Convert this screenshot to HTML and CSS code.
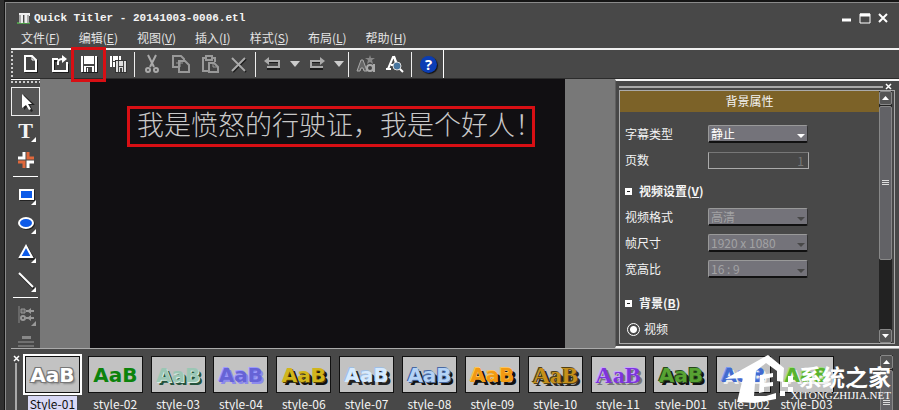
FILE: index.html
```html
<!DOCTYPE html>
<html lang="zh-CN">
<head>
<meta charset="utf-8">
<title>Quick Titler - 20141003-0006.etl</title>
<link rel="stylesheet" href="styles.css">
</head>
<body>
<div class="window">
  <header class="titlebar">
    <svg class="app-icon" width="16" height="12" viewBox="0 0 16 12"><path d="M1 11h13" stroke="#4f9a4a" stroke-width="2"/><path d="M3 1h4v10H3zM8 1h5v10H8z" fill="#aaa"/><path d="M3 1h11v3h-1V3h-2v8H9V3H7v8H5V3H3z" fill="#eee"/></svg>
    <h1>Quick Titler - 20141003-0006.etl</h1>
    <div class="window-buttons">
      <button aria-label="最小化"><svg width="12" height="12" viewBox="0 0 12 12"><path d="M1 8h9" stroke="#fff" stroke-width="3"/></svg></button>
      <button aria-label="最大化"><svg width="12" height="12" viewBox="0 0 12 12"><path d="M1 2h10v9H1z" fill="none" stroke="#fff"/><path d="M1 3h10" stroke="#fff" stroke-width="3"/></svg></button>
      <button aria-label="关闭"><svg width="12" height="12" viewBox="0 0 12 12"><path d="M2 2l8 8M10 2l-8 8" stroke="#fff" stroke-width="2"/></svg></button>
    </div>
  </header>

  <nav class="menu">
    <a href="#">文件(<u>F</u>)</a>
    <a href="#">编辑(<u>E</u>)</a>
    <a href="#">视图(<u>V</u>)</a>
    <a href="#">插入(<u>I</u>)</a>
    <a href="#">样式(<u>S</u>)</a>
    <a href="#">布局(<u>L</u>)</a>
    <a href="#">帮助(<u>H</u>)</a>
  </nav>

  <div class="toolbar">
    <span class="grip"></span>
    <button aria-label="新建"><svg width="20" height="20" viewBox="0 0 20 20"><path d="M5 3h7l4 4v11H5z" fill="none" stroke="#1c1c1c" stroke-width="2"/><path d="M4 2h7l4 4v11H4z" fill="#444" stroke="#fff" stroke-width="2"/><path d="M11 2v4h4" fill="none" stroke="#fff"/></svg></button>
    <button aria-label="打开"><svg width="20" height="20" viewBox="0 0 20 20"><path d="M8 6H3v11h14V9" fill="none" stroke="#1c1c1c" stroke-width="2" transform="translate(1 1)"/><path d="M8 5H3v12h14V8M8 11V8q0-3 5-3" fill="none" stroke="#fff" stroke-width="2"/><path d="M12 1l5 4-5 4z" fill="#fff"/></svg></button>
    <button class="marked" aria-label="保存"><svg width="20" height="20" viewBox="0 0 20 20"><path d="M3 3h16v16H3z" fill="#1c1c1c"/><path d="M2 2h16v16H2z" fill="#fff"/><path d="M4 2h1v16H4zM15 2h1v16h-1zM5 10h10v2H5zM7 13h6v5H7z" fill="#444"/><path d="M8 14h1v4H8z" fill="#fff"/></svg></button>
    <button aria-label="另存为"><svg width="20" height="20" viewBox="0 0 20 20"><path d="M2 2h11v11H2z" fill="#fff"/><path d="M4 2h1v11H4zM10 2h1v5h-1zM5 7h5v1H5z" fill="#444"/><path d="M7 6h12v13H7z" fill="#333"/><path d="M8 7h10v11H8z" fill="#ddd"/><path d="M10 7h1v11h-1zM15 7h1v11h-1zM11 12h4v1h-4zM12 14h2v4h-2z" fill="#444"/></svg></button>
    <span class="rule"></span>
    <button aria-label="剪切"><svg width="20" height="20" viewBox="0 0 20 20"><path d="M6 1l6 12M14 1L8 13" stroke="#aaa" stroke-width="2"/><circle cx="6" cy="16" r="2" fill="none" stroke="#aaa" stroke-width="2"/><circle cx="14" cy="16" r="2" fill="none" stroke="#aaa" stroke-width="2"/></svg></button>
    <button aria-label="复制"><svg width="20" height="20" viewBox="0 0 20 20"><path d="M2 2h8l3 3v8H2z" fill="none" stroke="#999" stroke-width="2"/><path d="M8 7h6l4 4v7H8z" fill="#444" stroke="#999" stroke-width="2"/><path d="M5 9h7M9 6v7" stroke="#999"/></svg></button>
    <button aria-label="粘贴"><svg width="20" height="20" viewBox="0 0 20 20"><path d="M8 17H3V4h3M12 4h3v4" fill="none" stroke="#999" stroke-width="2"/><path d="M6 2h6v4H6z" fill="none" stroke="#999" stroke-width="2"/><path d="M9 9h5l4 4v5H9z" fill="#444" stroke="#999" stroke-width="2"/><path d="M13 9v4h4" stroke="#999" fill="none"/></svg></button>
    <button aria-label="删除"><svg width="20" height="20" viewBox="0 0 20 20"><path d="M4 5l13 13M17 5L4 18" stroke="#1c1c1c" stroke-width="2"/><path d="M3 4l13 13M16 4L3 17" stroke="#aaa" stroke-width="2"/></svg></button>
    <span class="rule"></span>
    <button aria-label="撤销"><svg width="20" height="20" viewBox="0 0 20 20"><path d="M5 8h11v7H4" fill="none" stroke="#1c1c1c" stroke-width="2"/><path d="M5 7h11v6H4" fill="none" stroke="#aaa" stroke-width="2"/><path d="M1 7l5-4v8z" fill="#aaa"/></svg></button>
    <button class="drop" aria-label="撤销列表"><svg width="10" height="6" viewBox="0 0 10 6"><path d="M0 0h10L5 6z" fill="#ccc"/></svg></button>
    <button aria-label="重做"><svg width="20" height="20" viewBox="0 0 20 20"><path d="M15 8H4v7h12" fill="none" stroke="#1c1c1c" stroke-width="2"/><path d="M14 7H4v6h12" fill="none" stroke="#aaa" stroke-width="2"/><path d="M18 7l-5-4v8z" fill="#aaa"/></svg></button>
    <button class="drop" aria-label="重做列表"><svg width="10" height="6" viewBox="0 0 10 6"><path d="M0 0h10L5 6z" fill="#ccc"/></svg></button>
    <span class="rule"></span>
    <button aria-label="样式"><svg width="20" height="20" viewBox="0 0 20 20"><path d="M1 17L5 6h2l4 11H8l-1-3H5l-1 3z" fill="#666" stroke="#aaa"/><circle cx="14" cy="14" r="3" fill="#444" stroke="#aaa" stroke-width="2"/><path d="M18 10v8" stroke="#aaa" stroke-width="2"/><path d="M14 1l1 3h4l-3 2 1 4-3-2-3 2 1-4-3-2h4z" fill="#888"/></svg></button>
    <button aria-label="预览"><svg width="20" height="20" viewBox="0 0 20 20"><path d="M3 15L8 3h1l4 12" fill="none" stroke="#fff" stroke-width="2"/><path d="M9 2l5 14" stroke="#fff" stroke-width="2"/><path d="M1 15h5M6 11h6" stroke="#fff" stroke-width="2"/><circle cx="12" cy="12" r="4" fill="#48759e" stroke="#ddd"/><path d="M15 15l3 3" stroke="#fff" stroke-width="2"/></svg></button>
    <span class="rule"></span>
    <button class="help" aria-label="帮助"><span>?</span></button>
    <span class="edge"></span>
  </div>

  <main class="workspace">
    <aside class="tools">
      <span class="grip-row"></span>
      <button class="active" aria-label="选择"><svg width="22" height="22" viewBox="0 0 22 22"><path d="M9 4v15l4-4 3 6 2-1-3-6h5z" fill="#222"/><path d="M7 3v14l4-3 3 5 2-1-3-5h4z" fill="#fff"/></svg></button>
      <button class="more letter" aria-label="文字">T</button>
      <button aria-label="图像"><svg width="22" height="22" viewBox="0 0 22 22" fill="none" stroke-width="2"><path d="M3 9h6V3" stroke="#fff" stroke-width="3"/><path d="M13 3v6h6" stroke="#e0683c" stroke-width="3"/><path d="M3 13h6v6" stroke="#e0683c" stroke-width="3"/><path d="M19 13h-6v6" stroke="#fff" stroke-width="3"/></svg></button>
      <span class="line"></span>
      <button class="more" aria-label="矩形"><svg width="22" height="22" viewBox="0 0 22 22"><path d="M6 8h13v9H6z" stroke="#222" stroke-width="2"/><path d="M5 7h13v9H5z" fill="#0c5ae8" stroke="#fff" stroke-width="2"/></svg></button>
      <button class="more" aria-label="椭圆"><svg width="22" height="22" viewBox="0 0 22 22"><ellipse cx="12" cy="12" rx="7" ry="5" stroke="#222" stroke-width="2"/><ellipse cx="11" cy="11" rx="7" ry="5" fill="#0c5ae8" stroke="#fff" stroke-width="2"/></svg></button>
      <button class="more" aria-label="三角形"><svg width="22" height="22" viewBox="0 0 22 22"><path d="M12 6l7 12H5z" stroke="#222" stroke-width="2"/><path d="M11 5l6 11H5z" fill="#0c5ae8" stroke="#fff" stroke-width="2"/></svg></button>
      <button class="more" aria-label="直线"><svg width="22" height="22" viewBox="0 0 22 22"><path d="M5 5l14 14" stroke="#222" stroke-width="2"/><path d="M4 3l14 14" stroke="#fff" stroke-width="2"/></svg></button>
      <span class="line"></span>
      <button class="more dim" aria-label="对齐"><svg width="22" height="22" viewBox="0 0 22 22"><path d="M4 2v17" stroke="#888" stroke-width="1"/><path d="M6 5h4v4H6z" fill="#666" stroke="#999"/><circle cx="8" cy="14" r="2" fill="#444" stroke="#999" stroke-width="2"/><path d="M11 7h8M11 14h8" stroke="#999" stroke-width="2"/><path d="M12 7l4-3v6zM12 14l4-3v6z" fill="#999"/></svg></button>
      <button class="dim" aria-label="分布"><svg width="22" height="22" viewBox="0 0 22 22"><path d="M3 9h16M3 13h16" stroke="#999"/><path d="M7 3h9v3H7zM7 15h9v5H7z" fill="#888"/></svg></button>
    </aside>

    <section class="stage">
      <div class="canvas"><p class="caption">我是愤怒的行驶证，我是个好人！</p></div>
    </section>

    <aside class="panel">
      <div class="panel-top"><span class="bar"></span><button aria-label="关闭面板"><svg width="7" height="7" viewBox="0 0 7 7"><path d="M1 1l5 5M6 1L1 6" stroke="#fff" stroke-width="1.500"/></svg></button></div>
      <div class="panel-box">
        <form class="props">
          <h2>背景属性</h2>
          <div class="group first">
            <div class="row"><label for="kind">字幕类型</label><span class="pick"><select id="kind"><option>静止</option></select></span></div>
            <div class="row"><label for="pages">页数</label><input id="pages" type="text" value="1" disabled></div>
          </div>
          <div class="group">
            <h3><i class="fold"></i>视频设置(<u>V</u>)</h3>
            <div class="row"><label for="format">视频格式</label><span class="pick"><select id="format" disabled><option>高清</option></select></span></div>
            <div class="row"><label for="frame">帧尺寸</label><span class="pick"><select id="frame" disabled><option>1920 x 1080</option></select></span></div>
            <div class="row"><label for="ratio">宽高比</label><span class="pick"><select id="ratio" disabled><option>16 : 9</option></select></span></div>
          </div>
          <div class="group last">
            <h3><i class="fold"></i>背景(<u>B</u>)</h3>
            <div class="row"><label class="choice"><input type="radio" name="bg" checked>视频</label></div>
          </div>
        </form>
        <div class="scroll">
          <button class="up" aria-label="向上滚动"></button>
          <div class="track"><span class="thumb"></span></div>
          <button class="down" aria-label="向下滚动"></button>
        </div>
      </div>
    </aside>
  </main>

  <footer class="styles">
    <div class="styles-side"><button aria-label="关闭样式"><svg width="7" height="7" viewBox="0 0 7 7"><path d="M1 1l5 5M6 1L1 6" stroke="#fff" stroke-width="1.500"/></svg></button><span></span></div>
    <ul class="style-list">
      <li class="selected"><span class="swatch s1">AaB</span><span class="name">Style-01</span></li>
      <li><span class="swatch s2">AaB</span><span class="name">style-02</span></li>
      <li><span class="swatch s3">AaB</span><span class="name">style-03</span></li>
      <li><span class="swatch s4">AaB</span><span class="name">style-04</span></li>
      <li><span class="swatch s6">AaB</span><span class="name">style-06</span></li>
      <li><span class="swatch s7">AaB</span><span class="name">style-07</span></li>
      <li><span class="swatch s8">AaB</span><span class="name">style-08</span></li>
      <li><span class="swatch s9">AaB</span><span class="name">style-09</span></li>
      <li><span class="swatch serif s10">AaB</span><span class="name">style-10</span></li>
      <li><span class="swatch serif s11">AaB</span><span class="name">style-11</span></li>
      <li><span class="swatch d1">AaB</span><span class="name">style-D01</span></li>
      <li><span class="swatch d2">AaB</span><span class="name">style-D02</span></li>
      <li><span class="swatch d3">AaB</span><span class="name">style-D03</span></li>
    </ul>
    <div class="scroll">
      <button class="up" aria-label="向上滚动"></button>
      <div class="track"><span class="thumb"></span></div>
    </div>
  </footer>

  <div class="watermark">
    <svg width="70" height="50" viewBox="0 0 70 50" fill="#fff"><path d="M44 1L60 14 59 28 53 27 53 17 42 9 32 17 30 42 42 42 52 39 52 45 31 49 13 48 19 24 1 25z"/><path d="M36 21l13-2v4l-9 2v4l9-1v4l-9 1v5l-5 1z"/><path d="M64 22h5v6h-5zM58 28h6v5h-6zM64 33h5v5h-5zM56 37h5v5h-5z"/></svg>
    <div class="mark-text"><strong>系统之家</strong><span>XITONGZHIJIA.NET</span></div>
  </div>
</div>
</body>
</html>
```
FILE: styles.css
```css
* { box-sizing: border-box; }

body {
  margin: 0;
  background: #303030;
  color: #f4f4f4;
  font: 12px/16px "Noto Sans CJK SC", sans-serif;
}

button {
  padding: 0;
  border: 0;
  background: none;
  color: inherit;
  font: inherit;
}

svg { display: block; flex: none; }

.window {
  position: relative;
  display: flex;
  flex-direction: column;
  height: 100vh;
  margin-left: 4px;
  padding-left: 6px;
  overflow: hidden;
  border-top: 2px solid #151515;
  border-left: 1px solid #151515;
  background: #484848;
  box-shadow: inset 1px 1px #8a8a8a;
}

.titlebar {
  display: flex;
  align-items: center;
  height: 28px;
  padding: 4px 10px 0 5px;
}

.titlebar h1 {
  flex: 1;
  margin: 0 0 0 2px;
  font: bold 11px/16px "Liberation Mono", monospace;
}

.window-buttons { display: flex; gap: 6px; }

.menu {
  display: flex;
  gap: 19px;
  height: 18px;
  padding-left: 10px;
}

.menu a { color: #e4e4e4; text-decoration: none; }

.toolbar {
  display: flex;
  align-items: center;
  height: 31px;
  border-top: 2px solid #f0f0f0;
  border-bottom: 1px solid #2c2c2c;
}

.grip {
  width: 2px;
  height: 27px;
  margin-right: 3px;
  background: repeating-linear-gradient(#ccc 0 2px, transparent 2px 4px);
}

.toolbar button {
  position: relative;
  display: grid;
  place-items: center;
  width: 29px;
  height: 28px;
}

.toolbar .drop { width: 15px; }

.rule {
  width: 1px;
  height: 25px;
  margin: 0 2px;
  background: #eee;
}

.edge { width: 1px; height: 28px; background: #fff; }

.marked::after {
  content: "";
  position: absolute;
  inset: -3px -3px -4px -3px;
  z-index: 2;
  border: 3px solid #d80f14;
}

.help span {
  width: 17px;
  height: 17px;
  border-radius: 50%;
  background: #0b3db4;
  box-shadow: 1px 1px 1px #111;
  color: #fff;
  font: bold 15px/17px "Open Sans", sans-serif;
}

.workspace {
  display: flex;
  flex: 1;
  min-height: 0;
  border-bottom: 1px solid #aaa;
}

.tools {
  display: flex;
  flex: none;
  flex-direction: column;
  width: 29px;
  overflow: hidden;
}

.grip-row {
  flex: none;
  height: 6px;
  margin-bottom: 2px;
  border-top: 1px solid #fff;
  background: repeating-linear-gradient(90deg, #ccc 0 2px, transparent 2px 4px) 0 1px / 100% 2px no-repeat;
}

.tools button {
  position: relative;
  display: grid;
  flex: none;
  place-items: center;
  height: 29px;
}

.tools .active { border: 1px solid #eee; background: #555; }

.tools .letter { font: bold 22px/28px "Liberation Serif", serif; }

.more::after {
  content: "";
  position: absolute;
  right: 4px;
  bottom: 3px;
  width: 5px;
  height: 5px;
  background: #fff;
  clip-path: polygon(100% 0, 100% 100%, 0 100%);
}

.dim::after { background: #999; }

.line {
  flex: none;
  height: 1px;
  margin: 2px;
  background: #fff;
}

.stage {
  display: flex;
  flex: 1;
  min-width: 0;
  padding: 0 50px;
  background: #787878;
}

.canvas {
  flex: 1;
  min-width: 0;
  padding: 27px 30px 0 37px;
  background: #110f12;
}

.caption {
  height: 41px;
  margin: 0;
  padding: 0 7px;
  border: 3px solid #d80f14;
  color: #c8c8c8;
  font: 300 27px/30px "Noto Sans CJK SC", sans-serif;
  white-space: nowrap;
}

.panel {
  display: flex;
  flex: none;
  flex-direction: column;
  width: 284px;
  padding: 2px 3px;
  border-top: 2px solid #f4f4f4;
  border-bottom: 2px solid #f4f4f4;
  border-left: 1px solid #606060;
}

.panel-top { display: flex; align-items: center; gap: 2px; height: 7px; margin-right: 4px; }
.panel-top .bar { flex: 1; height: 2px; background: #aaa; }

.panel-box {
  display: flex;
  flex: 1;
  min-height: 0;
  margin-right: 1px;
  border: 1px solid #aaa;
}

.props { flex: 1; overflow: hidden; }

.props h2 {
  height: 21px;
  margin: 0 0 9px;
  background: #7c6228;
  font-size: 12px;
  font-weight: 400;
  line-height: 20px;
  text-align: center;
}

.group { margin-bottom: 8px; padding-left: 5px; }
.group.first { margin-bottom: 5px; }
.group.last { margin-bottom: 0; }

.props h3 {
  display: flex;
  align-items: center;
  height: 26px;
  margin: 0;
  font-size: 12px;
}

.fold {
  width: 7px;
  height: 7px;
  margin-right: 7px;
  border: 2px solid #fff;
  border-width: 3px 2px;
  background: #222;
}

.row { display: flex; align-items: center; height: 26px; }
.row > label:not(.choice) { width: 83px; }

.pick { position: relative; width: 100px; height: 18px; }

.pick::after {
  content: "";
  position: absolute;
  right: 3px;
  top: 9px;
  width: 8px;
  height: 4px;
  background: #fff;
  clip-path: polygon(0 0, 100% 0, 50% 100%);
}

.pick:has(:disabled)::after { background: #484848; }

.pick select {
  display: block;
  width: 100%;
  height: 18px;
  padding: 0 2px;
  appearance: none;
  border: 1px solid #999;
  border-right-color: #333;
  border-bottom: 2px solid #111;
  border-radius: 2px;
  background: #74737a;
  color: #fff;
  font: 12px/15px "Noto Sans CJK SC", sans-serif;
  opacity: 1;
}

.pick select:disabled { color: #a2a2a4; }

#pages {
  width: 101px;
  height: 17px;
  padding: 0 4px;
  border: 1px solid #aaa;
  border-top-color: #777;
  background: transparent;
  color: #777;
  font: inherit;
  text-align: right;
}

.choice { display: flex; align-items: center; gap: 4px; padding-left: 2px; }

.choice input {
  width: 13px;
  height: 13px;
  margin: 0;
  appearance: none;
  border: 1px solid #fff;
  border-radius: 50%;
  background: radial-gradient(circle, #fff 3px, transparent 4px);
}

.scroll {
  display: flex;
  flex-direction: column;
  width: 13px;
  margin-right: 2px;
  background: #222;
}

.scroll button {
  display: grid;
  flex: none;
  place-items: center;
  height: 14px;
  border: 1px solid #888;
  border-radius: 2px;
  background: #555;
}

.scroll button::after {
  content: "";
  width: 7px;
  height: 4px;
  background: #fff;
  clip-path: polygon(50% 0, 100% 100%, 0 100%);
}

.scroll .down::after { clip-path: polygon(0 0, 100% 0, 50% 100%); }

.track { flex: 1; padding-top: 1px; }

.thumb {
  display: grid;
  place-items: center;
  height: 69%;
  border: 1px solid #888;
  border-radius: 2px;
  background: #626266;
}

.thumb::after {
  content: "";
  width: 7px;
  height: 5px;
  background: repeating-linear-gradient(#ddd 0 1px, transparent 1px 2px);
}

.styles {
  display: flex;
  height: 61px;
  margin-right: 5px;
  padding-top: 6px;
}

.styles .scroll { height: 80px; margin-right: 1px; }
.styles .thumb { height: 100%; }

.styles-side {
  display: flex;
  flex-direction: column;
  align-items: center;
  gap: 1px;
  width: 10px;
}

.styles-side span { flex: 1; width: 2px; background: #aaa; }

.style-list {
  display: flex;
  flex: 1;
  margin: 0;
  padding: 0 42px 0 0;
  list-style: none;
}

.style-list li {
  display: flex;
  flex: 1 1 0;
  flex-direction: column;
  align-items: center;
  gap: 3px;
  min-width: 0;
}

.swatch {
  width: 55px;
  height: 37px;
  margin-top: 1px;
  border: 1px solid #111;
  background: #c2c2c2;
  font: bold 20px/36px "DejaVu Sans", sans-serif;
  text-align: center;
}

.swatch.serif { font: bold 24px/36px "Liberation Serif", serif; }

.selected .swatch { outline: 2px solid #fff; }
.name { padding: 0 2px; white-space: nowrap; }
.selected .name { background: #d9d9f6; color: #111; }

.s1 { color: #fff; text-shadow: 1px 1px #777, -1px -1px #777, 1px -1px #777, -1px 1px #777, 2px 2px 2px #888; }
.s2 { color: #0c830c; }
.s3 { color: #9bc6b4; text-shadow: 1px 1px #d8ece4, 3px 3px #24523c; }
.s4 { color: #6663d6; text-shadow: -1px -1px #9c9aff, 2px 2px #8c8aec; }
.s6 { color: #d1b51c; text-shadow: 1px 1px #564400, 3px 3px #111; }
.s7 { color: #d6eaff; text-shadow: -1px -1px #a0bfe4, 3px 3px #222; }
.s8 { color: #b4d2f5; text-shadow: -1px -1px #4869a2, 1px 1px #4869a2, 3px 3px #111; }
.s9 { color: #f19a12; text-shadow: -1px -1px #ffc45a, 3px 3px #111; }
.s10 { color: #c6901a; text-shadow: -1px -1px #514016, 1px 1px #514016, 3px 3px #222; }
.s11 { color: #7d35dc; text-shadow: -1px -1px #c9a4ff, 2px 2px #777; }
.d1 { color: #57a232; text-shadow: -1px -1px #26481b, 1px 1px #26481b, 3px 3px #111; }
.d2 { color: #426ad0; text-shadow: -1px -1px #7799ed, 2px 2px #eee; }
.d3 { color: #59b32d; text-shadow: -1px -1px #a4df84, 2px 2px #eee; }

.watermark {
  position: absolute;
  right: 8px;
  bottom: 6px;
  display: flex;
  color: #fff;
  pointer-events: none;
}

.watermark svg { margin-right: -3px; }

.mark-text {
  display: flex;
  flex-direction: column;
  align-items: flex-end;
  padding-top: 10px;
}

.mark-text strong { font-size: 23px; line-height: 25px; }
.mark-text span { font: 11px/13px "Liberation Serif", serif; }
```
